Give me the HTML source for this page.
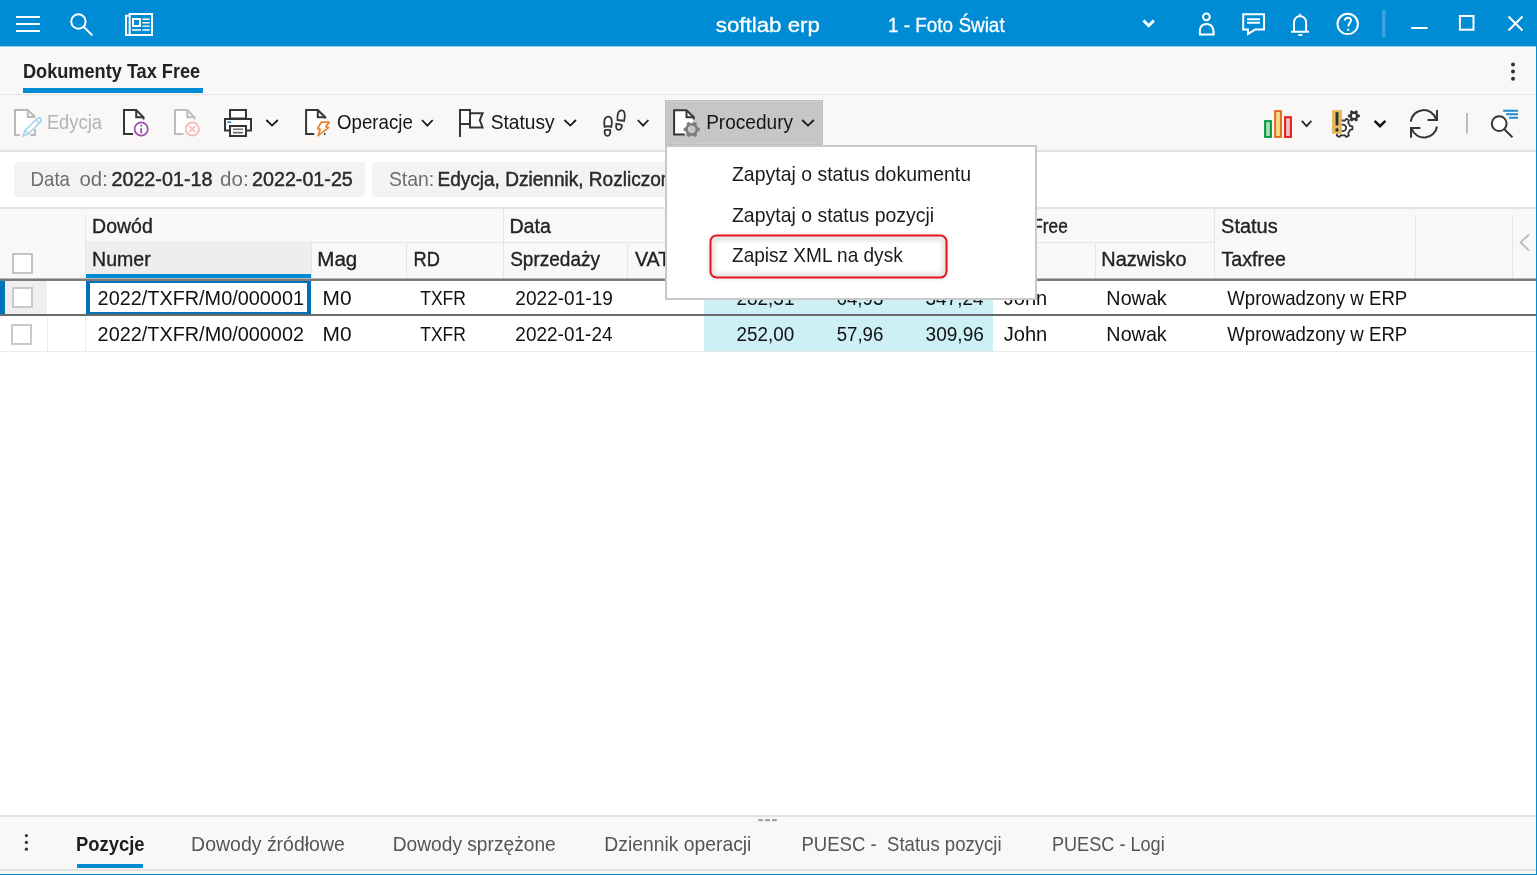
<!DOCTYPE html><html><head><meta charset="utf-8"><style>html,body{margin:0;padding:0;background:#fff;overflow:hidden}</style></head><body><svg width="1537" height="875" viewBox="0 0 1537 875" style="display:block;will-change:transform;font-family:'Liberation Sans',sans-serif">
<rect x="0" y="0" width="1537" height="875" fill="#FFFFFF" />
<rect x="0" y="0" width="1537" height="46" fill="#008BD5" />
<g fill="#fff">
<rect x="16" y="16" width="24" height="2" fill="#fff" />
<rect x="16" y="23" width="24" height="2" fill="#fff" />
<rect x="16" y="30" width="24" height="2" fill="#fff" />
</g>
<g fill="none" stroke="#fff" stroke-width="2">
<circle cx="78.4" cy="21.5" r="7.2"/>
<path d="M83.6 26.8 L92.4 35.4"/>
<rect x="129.7" y="14" width="22.3" height="21" />
<path d="M129.7 15.8 H126 V35 H129.7"/>
<rect x="133" y="19" width="7" height="7" />
</g>
<g stroke="#fff" stroke-width="1.6">
<path d="M142.4 19.3H149.6M142.4 22.7H149.6M142.4 26.1H149.6M142.4 30H149.6M132 30H141" stroke-width="1.4"/>
</g>
<text x="715.78" y="32" font-size="20.35" font-weight="normal" fill="#fff" textLength="104.16" lengthAdjust="spacingAndGlyphs" stroke="#fff" stroke-width="0.3">softlab erp</text>
<text x="887.96" y="32" font-size="20.35" font-weight="normal" fill="#fff" textLength="116.68" lengthAdjust="spacingAndGlyphs" stroke="#fff" stroke-width="0.3">1 - Foto Świat</text>
<g fill="none" stroke="#fff" stroke-width="2">
<path d="M1143.5 20.5 L1148.7 25.7 L1153.9 20.5" stroke-width="3"/>
<circle cx="1206.4" cy="16.8" r="3.4"/>
<path d="M1200 34.5 C1199 27 1202 24 1206.6 24 C1211 24 1214 27 1213.6 34.5 Z"/>
<path d="M1243.2 14.3 H1264 V29.6 H1255 L1248 34 V29.6 H1243.2 Z"/>
<path d="M1247 19.2H1260M1247 22.8H1260"/>
<path d="M1291 31.7 H1309 M1294 31.7 V22.8 C1294 18.6 1296.7 16.2 1300.1 16.2 C1303.5 16.2 1306.1 18.6 1306.1 22.8 V31.7"/>
<path d="M1300.1 12.9 L1298.2 16.6 H1302 Z" fill="#fff" stroke="none"/>
<path d="M1298.3 35H1302.3"/>
<circle cx="1347.7" cy="23.9" r="10.2"/>
<path d="M1345 20.6 C1345 18.8 1346.3 17.8 1348 17.8 C1349.8 17.8 1351 19 1351 20.6 C1351 22.5 1348.2 23.6 1348.2 26.6" stroke-width="1.9"/>
<path d="M1411.3 28H1427.6"/>
<rect x="1459.9" y="16" width="13.6" height="13.7"/>
<path d="M1508.5 16.5L1522.5 30.5M1522.5 16.5L1508.5 30.5"/>
</g>
<rect x="1347.2" y="28.8" width="2" height="2" fill="#fff" />
<rect x="1382" y="10" width="3.5" height="27.5" fill="#3CA3DF" />
<rect x="0" y="46" width="1536" height="104" fill="#F9F8F7" />
<rect x="0" y="46" width="1536" height="1" fill="#8FCBEB" />
<rect x="0" y="94" width="1536" height="1" fill="#E6E5E4" />
<rect x="0" y="150" width="1536" height="2" fill="#E3E2E1" />
<text x="22.99" y="78" font-size="20.35" font-weight="bold" fill="#222" textLength="177.22" lengthAdjust="spacingAndGlyphs" >Dokumenty Tax Free</text>
<rect x="23" y="88" width="180" height="5" fill="#008BD5" />
<circle cx="1513" cy="64.4" r="2" fill="#333"/>
<circle cx="1513" cy="71.6" r="2" fill="#333"/>
<circle cx="1513" cy="78.8" r="2" fill="#333"/>
<path d="M20 135 H15 V110 H27.8 L35 117 V117" fill="#fff" stroke="#B9B9B9" stroke-width="2" stroke-linejoin="miter"/>
<path d="M27.8 110 V117 H35" fill="none" stroke="#B9B9B9" stroke-width="2"/>
<path d="M30.5 135 H35 V129" fill="none" stroke="#B9B9B9" stroke-width="2"/>
<g fill="#fff" stroke="#A9D3EC" stroke-width="1.6" stroke-linejoin="round"><path d="M23 136.3 L25 130.5 L37.5 118.5 A2.2 2.2 0 0 1 40.6 121.6 L28.5 133.8 Z"/><path d="M25 130.5 L28.5 133.8 M36 120 L39 123"/></g>
<text x="46.89" y="129" font-size="19.62" font-weight="normal" fill="#B4B4B4" textLength="55.11" lengthAdjust="spacingAndGlyphs" >Edycja</text>
<path d="M133 134 H124 V110 H136.2 L143.5 117.3 V119.5" fill="#fff" stroke="#363636" stroke-width="2" stroke-linejoin="miter"/>
<path d="M136.2 110 V117.3 H143.5" fill="none" stroke="#363636" stroke-width="2"/>
<circle cx="141.2" cy="129" r="6.6" fill="#fff" stroke="#9C4DAB" stroke-width="1.7"/>
<path d="M141.2 128.2 V133.4" stroke="#9C4DAB" stroke-width="1.8"/><circle cx="141.2" cy="125.7" r="1" fill="#9C4DAB"/>
<path d="M183.5 134 H175 V110 H187.3 L194.5 117.3 V119.5" fill="#fff" stroke="#BDBDBD" stroke-width="2" stroke-linejoin="miter"/>
<path d="M187.3 110 V117.3 H194.5" fill="none" stroke="#BDBDBD" stroke-width="2"/>
<circle cx="192.3" cy="129" r="6.6" fill="#fff" stroke="#F3B5B5" stroke-width="1.7"/>
<path d="M189.3 126 L195.3 132 M195.3 126 L189.3 132" stroke="#F3B5B5" stroke-width="1.7"/>
<g fill="#fff" stroke="#363636" stroke-width="2">
<rect x="230" y="110" width="16" height="8.5"/>
<path d="M230 130.6 H225 V119 H251 V130.6 H246"/>
<rect x="230" y="126" width="16" height="10"/>
</g>
<path d="M233 129.2H243M233 132.6H243" stroke="#707070" stroke-width="1.6"/>
<path d="M227.2 122.2H231" stroke="#1E88D0" stroke-width="1.6"/>
<path d="M266.3 120 L272.05 125.6 L277.8 120" fill="none" stroke="#1a1a1a" stroke-width="1.8"/>
<path d="M314.3 134 H306.1 V110.1 H317.8 L325.2 117.2 V118.5" fill="#fff" stroke="#363636" stroke-width="2" stroke-linejoin="miter"/>
<path d="M317.8 110.1 V117.2 H325.2" fill="none" stroke="#363636" stroke-width="2"/>
<path d="M325.4 134 H324" stroke="#2F2F2F" stroke-width="2"/>
<path d="M321.3 122.2 H329.2 L325.8 126.6 L328.5 127.6 L318.2 135.6 L320.2 129.3 L317.6 128.4 Z" fill="#fff" stroke="#E8862E" stroke-width="1.8" stroke-linejoin="round"/>
<text x="337.12" y="129" font-size="19.62" font-weight="normal" fill="#151515" textLength="75.71" lengthAdjust="spacingAndGlyphs" >Operacje</text>
<path d="M422 120 L427.35 125.6 L432.7 120" fill="none" stroke="#1a1a1a" stroke-width="1.8"/>
<path d="M460 137 V110 H470 V124 H460 M470 113.2 H482.6 L479.8 120.3 L482.6 127.4 H470 V124" fill="#fff" stroke="#363636" stroke-width="2"/>
<path d="M460 137 V110" stroke="#363636" stroke-width="2"/>
<text x="490.73" y="129" font-size="19.62" font-weight="normal" fill="#151515" textLength="63.91" lengthAdjust="spacingAndGlyphs" >Statusy</text>
<path d="M564.5 120 L570.25 125.6 L576 120" fill="none" stroke="#1a1a1a" stroke-width="1.8"/>
<g fill="#fff" stroke="#363636" stroke-width="1.8">
<path d="M604.6 126.8 C603.8 122 604 117 608 116.6 C612 116.4 612.4 121.5 611.3 126.8 C609 126 607 126 604.6 126.8 Z"/>
<path d="M604.8 130.2 C607 129.8 608.8 129.8 610.2 130.2 C610.6 134 609.5 135.8 607.4 135.8 C605.3 135.8 604.2 134 604.8 130.2 Z"/>
<path d="M617.6 120.2 C617 115 618 110.5 621.4 110.3 C625 110.2 625.5 115 624 121 C622 120 620 120.3 617.6 120.2 Z"/>
<path d="M616.4 123.8 C618.5 124 620.5 124.4 622 125.3 C621.8 128.5 620 130 618.2 129.8 C616 129.5 615.8 127 616.4 123.8 Z"/>
</g>
<path d="M637.8 120 L643.0999999999999 125.6 L648.4 120" fill="none" stroke="#1a1a1a" stroke-width="1.8"/>
<rect x="665.5" y="100.5" width="157" height="44" fill="#C6C6C6" stroke="#BFBFBF" stroke-width="1"/>
<rect x="666.5" y="101.5" width="155" height="42" fill="none" stroke="#CDCDCD" stroke-width="1"/>
<path d="M684.7 134.6 H674.1 V110.3 H686.5 L693.8 117.2 V119.6" fill="#fff" stroke="#363636" stroke-width="2" stroke-linejoin="miter"/>
<path d="M686.5 110.3 V117.2 H693.8" fill="none" stroke="#363636" stroke-width="2"/>
<g transform="translate(691.7 129.4)"><circle r="5.2" fill="none" stroke="#7C7C7C" stroke-width="2.6"/><rect x="-1.6" y="-8" width="3.2" height="3.4" fill="#7C7C7C" transform="rotate(30)"/><rect x="-1.6" y="-8" width="3.2" height="3.4" fill="#7C7C7C" transform="rotate(90)"/><rect x="-1.6" y="-8" width="3.2" height="3.4" fill="#7C7C7C" transform="rotate(150)"/><rect x="-1.6" y="-8" width="3.2" height="3.4" fill="#7C7C7C" transform="rotate(210)"/><rect x="-1.6" y="-8" width="3.2" height="3.4" fill="#7C7C7C" transform="rotate(270)"/><rect x="-1.6" y="-8" width="3.2" height="3.4" fill="#7C7C7C" transform="rotate(330)"/></g>
<text x="706.14" y="129" font-size="19.62" font-weight="normal" fill="#151515" textLength="86.90" lengthAdjust="spacingAndGlyphs" >Procedury</text>
<path d="M802.2 120 L808.0 125.6 L813.8 120" fill="none" stroke="#1a1a1a" stroke-width="1.8"/>
<rect x="1265.1" y="121.1" width="5.8" height="15.8" fill="#B2DBB5" stroke="#009A3E" stroke-width="2"/>
<rect x="1275.1" y="111.1" width="5.8" height="25.8" fill="#F6DB8C" stroke="#E56A17" stroke-width="2"/>
<rect x="1285.1" y="117.2" width="5.8" height="19.7" fill="#F1BFC0" stroke="#E31A1A" stroke-width="2"/>
<path d="M1301.8 120.8 L1306.6 126.2 L1311.4 120.8" fill="none" stroke="#2a2a2a" stroke-width="1.8"/>
<path d="M1349.92 125.90 L1352.40 126.40 L1352.40 129.40 L1349.92 129.90 A7.4 7.4 0 0 1 1348.09 133.07 L1348.90 135.46 L1346.30 136.96 L1344.63 135.07 A7.4 7.4 0 0 1 1340.97 135.07 L1339.30 136.96 L1336.70 135.46 L1337.51 133.07 A7.4 7.4 0 0 1 1335.68 129.90 L1333.20 129.40 L1333.20 126.40 L1335.68 125.90 A7.4 7.4 0 0 1 1337.51 122.73 L1336.70 120.34 L1339.30 118.84 L1340.97 120.73 A7.4 7.4 0 0 1 1344.63 120.73 L1346.30 118.84 L1348.90 120.34 L1348.09 122.73 A7.4 7.4 0 0 1 1349.92 125.90 Z" fill="#fff" stroke="#363636" stroke-width="1.8" stroke-linejoin="round"/>
<circle cx="1342.8" cy="127.9" r="3.3" fill="none" stroke="#363636" stroke-width="1.8"/>
<path d="M1357.72 114.70 L1359.40 115.00 L1359.40 116.80 L1357.72 117.10 L1356.85 118.60 L1357.43 120.21 L1355.87 121.11 L1354.77 119.80 L1353.03 119.80 L1351.93 121.11 L1350.37 120.21 L1350.95 118.60 L1350.08 117.10 L1348.40 116.80 L1348.40 115.00 L1350.08 114.70 L1350.95 113.20 L1350.37 111.59 L1351.93 110.69 L1353.03 112.00 L1354.77 112.00 L1355.87 110.69 L1357.43 111.59 L1356.85 113.20 Z" fill="#2F2F2F" stroke="#363636" stroke-width="1.0" stroke-linejoin="round"/>
<circle cx="1353.9" cy="115.9" r="1.0" fill="none" stroke="#363636" stroke-width="1.0"/>
<circle cx="1353.9" cy="115.9" r="2.1" fill="#fff"/>
<rect x="1332.1" y="110.1" width="9.8" height="23.7" fill="#E6B85C" />
<rect x="1335.6" y="112.2" width="2.8" height="13.2" fill="#2D3038" />
<rect x="1335.6" y="128.4" width="2.8" height="3.1" fill="#2D3038" />
<path d="M1374.6 120.8 L1380.0 126.2 L1385.4 120.8" fill="none" stroke="#111" stroke-width="2.4"/>
<g fill="none" stroke="#363636" stroke-width="2">
<path d="M1410.8 121.6 A13 13 0 0 1 1436.2 119.5"/>
<path d="M1437 110 V120 H1427.5"/>
<path d="M1437 126.5 A13 13 0 0 1 1411.8 128.7"/>
<path d="M1411 137.8 V128 H1420.3"/>
</g>
<rect x="1466" y="113" width="2" height="20.6" fill="#BDBDBD" />
<circle cx="1499.2" cy="123.6" r="7.4" fill="#fff" stroke="#363636" stroke-width="2"/>
<path d="M1504.6 129.5 L1512.4 137.2" stroke="#363636" stroke-width="2"/>
<path d="M1503.2 110.8H1518M1506.2 114.3H1518M1509.1 117.8H1518" stroke="#1E88D0" stroke-width="2"/>
<rect x="14" y="162" width="351" height="35" rx="4" fill="#F3F3F3"/>
<rect x="372" y="162" width="300" height="35" rx="4" fill="#F3F3F3"/>
<text x="30.46" y="186" font-size="19.62" font-weight="normal" fill="#6E6E6E" textLength="39.54" lengthAdjust="spacingAndGlyphs" >Data</text>
<text x="79.54" y="186" font-size="19.62" font-weight="normal" fill="#6E6E6E" textLength="28.32" lengthAdjust="spacingAndGlyphs" >od:</text>
<text x="111.41" y="186" font-size="19.62" font-weight="normal" fill="#2A2A2A" textLength="101.05" lengthAdjust="spacingAndGlyphs" stroke="#2A2A2A" stroke-width="0.45">2022-01-18</text>
<text x="220.14" y="186" font-size="19.62" font-weight="normal" fill="#6E6E6E" textLength="28.54" lengthAdjust="spacingAndGlyphs" >do:</text>
<text x="252.01" y="186" font-size="19.62" font-weight="normal" fill="#2A2A2A" textLength="100.82" lengthAdjust="spacingAndGlyphs" stroke="#2A2A2A" stroke-width="0.45">2022-01-25</text>
<text x="388.92" y="186" font-size="19.62" font-weight="normal" fill="#6E6E6E" textLength="45.36" lengthAdjust="spacingAndGlyphs" >Stan:</text>
<text x="437.44" y="186" font-size="19.62" font-weight="normal" fill="#2A2A2A" textLength="223.36" lengthAdjust="spacingAndGlyphs" stroke="#2A2A2A" stroke-width="0.45">Edycja, Dziennik, Rozliczo</text>
<text x="660.81" y="186" font-size="19.62" font-weight="normal" fill="#2A2A2A" textLength="19.99" lengthAdjust="spacingAndGlyphs" stroke="#2A2A2A" stroke-width="0.45">ne</text>
<rect x="0" y="207" width="1536" height="2" fill="#E4E4E4" />
<rect x="0" y="209" width="1536" height="70" fill="#F9F8F7" />
<rect x="86" y="243" width="225" height="31" fill="#EFEEEC" />
<rect x="85" y="215" width="1" height="64" fill="#E6E5E3" />
<rect x="311" y="243" width="1" height="36" fill="#E6E5E3" />
<rect x="406" y="243" width="1" height="36" fill="#E6E5E3" />
<rect x="503" y="209" width="1" height="70" fill="#E6E5E3" />
<rect x="627" y="243" width="1" height="36" fill="#E6E5E3" />
<rect x="1095" y="243" width="1" height="36" fill="#E6E5E3" />
<rect x="1214" y="209" width="1" height="70" fill="#E6E5E3" />
<rect x="1415" y="215" width="1" height="64" fill="#E6E5E3" />
<rect x="1512" y="215" width="1" height="64" fill="#E6E5E3" />
<rect x="86" y="242" width="417" height="1" fill="#E6E5E3" />
<rect x="504" y="242" width="710" height="1" fill="#E6E5E3" />
<rect x="86" y="274" width="225" height="4" fill="#008BD5" />
<rect x="0" y="278" width="1536" height="1" fill="#B5B5B5" />
<rect x="0" y="279" width="1536" height="2" fill="#7A7A7A" />
<text x="92.10" y="233" font-size="20.35" font-weight="normal" fill="#222" textLength="60.65" lengthAdjust="spacingAndGlyphs" stroke="#222" stroke-width="0.35">Dowód</text>
<text x="509.38" y="233" font-size="20.35" font-weight="normal" fill="#222" textLength="41.62" lengthAdjust="spacingAndGlyphs" stroke="#222" stroke-width="0.35">Data</text>
<text x="1000.62" y="233" font-size="20.35" font-weight="normal" fill="#222" textLength="67.12" lengthAdjust="spacingAndGlyphs" stroke="#222" stroke-width="0.35">Tax Free</text>
<text x="1221.09" y="233" font-size="20.35" font-weight="normal" fill="#222" textLength="56.63" lengthAdjust="spacingAndGlyphs" stroke="#222" stroke-width="0.35">Status</text>
<text x="92.10" y="266" font-size="20.35" font-weight="normal" fill="#222" textLength="58.63" lengthAdjust="spacingAndGlyphs" stroke="#222" stroke-width="0.35">Numer</text>
<text x="317.31" y="266" font-size="20.35" font-weight="normal" fill="#222" textLength="40.01" lengthAdjust="spacingAndGlyphs" stroke="#222" stroke-width="0.35">Mag</text>
<text x="413.50" y="266" font-size="20.35" font-weight="normal" fill="#222" textLength="26.37" lengthAdjust="spacingAndGlyphs" stroke="#222" stroke-width="0.35">RD</text>
<text x="510.14" y="266" font-size="20.35" font-weight="normal" fill="#222" textLength="89.90" lengthAdjust="spacingAndGlyphs" stroke="#222" stroke-width="0.35">Sprzedaży</text>
<text x="634.92" y="266" font-size="20.35" font-weight="normal" fill="#222" textLength="35.50" lengthAdjust="spacingAndGlyphs" stroke="#222" stroke-width="0.35">VAT</text>
<text x="1101.37" y="266" font-size="20.35" font-weight="normal" fill="#222" textLength="85.17" lengthAdjust="spacingAndGlyphs" stroke="#222" stroke-width="0.35">Nazwisko</text>
<text x="1221.57" y="266" font-size="20.35" font-weight="normal" fill="#222" textLength="64.27" lengthAdjust="spacingAndGlyphs" stroke="#222" stroke-width="0.35">Taxfree</text>
<path d="M1529 234.5 L1520.6 242.4 L1529 250.4" fill="none" stroke="#BBBBBB" stroke-width="1.8"/>
<rect x="13" y="254" width="19" height="19" fill="#fff" stroke="#C4C4C4" stroke-width="2"/>
<rect x="0" y="281" width="1536" height="33" fill="#FFFFFF" />
<rect x="0" y="281" width="5" height="33" fill="#0073B8" />
<rect x="5" y="281" width="42" height="33" fill="#F0EFEE" />
<rect x="13" y="288" width="19" height="19" fill="#fff" stroke="#C8C8C8" stroke-width="2"/>
<rect x="704" y="281" width="289" height="33" fill="#CDEFF6" />
<rect x="0" y="314" width="1536" height="2" fill="#6B6B6B" />
<rect x="704" y="316" width="289" height="35" fill="#CDEFF6" />
<rect x="47" y="316" width="1" height="35" fill="#EEEEEE" />
<rect x="85" y="316" width="1" height="35" fill="#EEEEEE" />
<rect x="12" y="325" width="19" height="19" fill="#fff" stroke="#C8C8C8" stroke-width="2"/>
<rect x="0" y="351" width="1536" height="1" fill="#EBEBEB" />
<path d="M88 282 H309 V313 H88 Z" fill="none" stroke="#0071B8" stroke-width="2"/>
<rect x="86" y="281" width="4" height="33" fill="#0071B8" />
<rect x="307" y="281" width="4" height="33" fill="#0071B8" />
<text x="97.60" y="305" font-size="19.62" font-weight="normal" fill="#111" textLength="206.37" lengthAdjust="spacingAndGlyphs" >2022/TXFR/M0/000001</text>
<text x="322.49" y="305" font-size="19.62" font-weight="normal" fill="#111" textLength="29.03" lengthAdjust="spacingAndGlyphs" >M0</text>
<text x="420.21" y="305" font-size="19.62" font-weight="normal" fill="#111" textLength="45.71" lengthAdjust="spacingAndGlyphs" >TXFR</text>
<text x="515.34" y="305" font-size="19.62" font-weight="normal" fill="#111" textLength="97.56" lengthAdjust="spacingAndGlyphs" >2022-01-19</text>
<text x="736.55" y="305" font-size="19.62" font-weight="normal" fill="#111" textLength="57.88" lengthAdjust="spacingAndGlyphs" >282,31</text>
<text x="836.45" y="305" font-size="19.62" font-weight="normal" fill="#111" textLength="46.98" lengthAdjust="spacingAndGlyphs" >64,93</text>
<text x="925.58" y="305" font-size="19.62" font-weight="normal" fill="#111" textLength="57.98" lengthAdjust="spacingAndGlyphs" >347,24</text>
<text x="1003.69" y="305" font-size="19.62" font-weight="normal" fill="#111" textLength="43.62" lengthAdjust="spacingAndGlyphs" >John</text>
<text x="1106.38" y="305" font-size="19.62" font-weight="normal" fill="#111" textLength="60.39" lengthAdjust="spacingAndGlyphs" >Nowak</text>
<text x="1227.22" y="305" font-size="19.62" font-weight="normal" fill="#111" textLength="180.06" lengthAdjust="spacingAndGlyphs" >Wprowadzony w ERP</text>
<text x="97.60" y="341" font-size="19.62" font-weight="normal" fill="#111" textLength="206.40" lengthAdjust="spacingAndGlyphs" >2022/TXFR/M0/000002</text>
<text x="322.49" y="341" font-size="19.62" font-weight="normal" fill="#111" textLength="29.03" lengthAdjust="spacingAndGlyphs" >M0</text>
<text x="420.21" y="341" font-size="19.62" font-weight="normal" fill="#111" textLength="45.71" lengthAdjust="spacingAndGlyphs" >TXFR</text>
<text x="515.34" y="341" font-size="19.62" font-weight="normal" fill="#111" textLength="97.21" lengthAdjust="spacingAndGlyphs" >2022-01-24</text>
<text x="736.55" y="341" font-size="19.62" font-weight="normal" fill="#111" textLength="57.69" lengthAdjust="spacingAndGlyphs" >252,00</text>
<text x="836.65" y="341" font-size="19.62" font-weight="normal" fill="#111" textLength="46.77" lengthAdjust="spacingAndGlyphs" >57,96</text>
<text x="925.57" y="341" font-size="19.62" font-weight="normal" fill="#111" textLength="58.26" lengthAdjust="spacingAndGlyphs" >309,96</text>
<text x="1003.69" y="341" font-size="19.62" font-weight="normal" fill="#111" textLength="43.62" lengthAdjust="spacingAndGlyphs" >John</text>
<text x="1106.38" y="341" font-size="19.62" font-weight="normal" fill="#111" textLength="60.39" lengthAdjust="spacingAndGlyphs" >Nowak</text>
<text x="1227.22" y="341" font-size="19.62" font-weight="normal" fill="#111" textLength="180.06" lengthAdjust="spacingAndGlyphs" >Wprowadzony w ERP</text>
<rect x="666" y="146" width="370" height="153" fill="#fff" stroke="#C9C9C9" stroke-width="2"/>
<text x="731.98" y="181" font-size="19.62" font-weight="normal" fill="#1A1A1A" textLength="239.11" lengthAdjust="spacingAndGlyphs" >Zapytaj o status dokumentu</text>
<text x="731.98" y="222" font-size="19.62" font-weight="normal" fill="#1A1A1A" textLength="202.23" lengthAdjust="spacingAndGlyphs" >Zapytaj o status pozycji</text>
<defs><filter id="sh" x="-10%" y="-30%" width="120%" height="160%"><feGaussianBlur stdDeviation="2.5"/></filter></defs>
<rect x="712" y="238" width="233" height="38" rx="5" fill="none" stroke="#999" stroke-width="3" opacity="0.5" filter="url(#sh)"/>
<rect x="710.5" y="235.5" width="236" height="42" rx="6" fill="none" stroke="#E8141C" stroke-width="2"/>
<text x="732.00" y="262.2" font-size="19.62" font-weight="normal" fill="#1A1A1A" textLength="170.67" lengthAdjust="spacingAndGlyphs" >Zapisz XML na dysk</text>
<rect x="0" y="815" width="1536" height="2" fill="#E3E3E3" />
<rect x="0" y="817" width="1536" height="52" fill="#F9F8F7" />
<rect x="0" y="869" width="1536" height="2" fill="#E3E3E3" />
<rect x="0" y="871" width="1536" height="3" fill="#F9F8F7" />
<rect x="0" y="874" width="1537" height="1" fill="#008BD5" />
<rect x="1536" y="46" width="1" height="829" fill="#008BD5" />
<circle cx="26.4" cy="835.6" r="1.6" fill="#333"/>
<circle cx="26.4" cy="842.4" r="1.6" fill="#333"/>
<circle cx="26.4" cy="849.2" r="1.6" fill="#333"/>
<path d="M758.3 820.2H762.8M765.1 820.2H770M772.1 820.2H776.8" stroke="#A3A3A3" stroke-width="2.2"/>
<text x="75.97" y="851" font-size="19.62" font-weight="bold" fill="#1E1E1E" textLength="68.66" lengthAdjust="spacingAndGlyphs" >Pozycje</text>
<rect x="77" y="864" width="66" height="4" fill="#008BD5" />
<text x="191.10" y="851" font-size="19.62" font-weight="normal" fill="#555" textLength="153.76" lengthAdjust="spacingAndGlyphs" >Dowody źródłowe</text>
<text x="392.73" y="851" font-size="19.62" font-weight="normal" fill="#555" textLength="163.02" lengthAdjust="spacingAndGlyphs" >Dowody sprzężone</text>
<text x="604.32" y="851" font-size="19.62" font-weight="normal" fill="#555" textLength="147.09" lengthAdjust="spacingAndGlyphs" >Dziennik operacji</text>
<text x="801.48" y="851" font-size="19.62" font-weight="normal" fill="#555" textLength="200.07" lengthAdjust="spacingAndGlyphs" xml:space="preserve">PUESC -  Status pozycji</text>
<text x="1051.91" y="851" font-size="19.62" font-weight="normal" fill="#555" textLength="112.81" lengthAdjust="spacingAndGlyphs" >PUESC - Logi</text></svg></body></html>
